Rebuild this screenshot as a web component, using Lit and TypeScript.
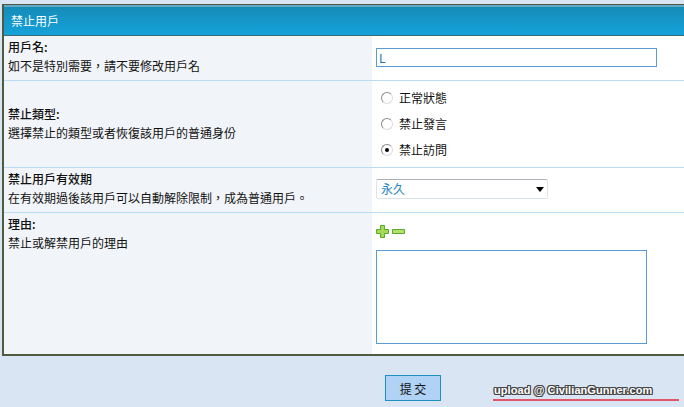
import { LitElement, html, css } from "lit";
import { customElement } from "lit/decorators.js";

const COMMA = "\uFF0C";

@customElement("app-root")
export class AppRoot extends LitElement {
  static styles = css`
    :host { display: block; position: relative; width: 684px; height: 407px; overflow: hidden; background: #dae5f3;
      font-family: "Noto Sans CJK TC", "Liberation Sans", sans-serif; font-size: 12px; line-height: 18px; color: #111; }
    .panel { margin: 4px 0 0 2px; border: solid #4f5b40; border-width: 1px 0 2px 2px; height: 352px; box-sizing: border-box; display: flex; flex-direction: column; background: #fff; }
    .head { height: 31px; border-top: 2px solid #63aac8; border-bottom: 1px solid #3d6a72; box-sizing: border-box; flex: none; padding-left: 7px;
      background: linear-gradient(#168cb8, #14a2da); color: #fff; display: flex; align-items: center; }
    .row { display: grid; grid-template-columns: 368px 1fr; border-bottom: 1px solid #bcdcf3; box-sizing: border-box; flex: none; }
    .row:last-child { border-bottom: 0; flex: 1; }
    .l { background: #f1f5f9; padding: 2px 0 0 4px; }
    .r { padding-left: 4px; }
    .r1 { height: 45px; } .r2 { height: 87px; } .r3 { height: 45px; }
    .r2 .l { padding-top: 24px; }
    b { font-weight: 500; display: block; }
    .desc { display: block; margin-top: 1px; }
    .input { width: 281px; height: 19px; margin-top: 12px; border: 1px solid #5b9bd5; box-sizing: border-box; background: #fff; color: #1a6fa8; padding: 0 0 0 2px; line-height: 17px; font-size: 12px; }
    .opts { display: flex; flex-direction: column; gap: 8px; padding: 8px 0 0 5px; }
    .opt { display: flex; align-items: center; gap: 6px; height: 18px; }
    .radio { width: 12px; height: 12px; border-radius: 50%; box-sizing: border-box; border: 1px solid; border-color: #8a8a8a #dcdcdc #dcdcdc #8a8a8a; background: #fff; display: flex; align-items: center; justify-content: center; }
    .dot { width: 4px; height: 4px; border-radius: 50%; background: #000; }
    .select { width: 172px; height: 20px; margin-top: 11px; box-sizing: border-box; border: 1px solid #dde3ea; border-top-color: #aeaeb6; border-radius: 2px; background: #fff; color: #2585bd; display: flex; align-items: center; justify-content: space-between; padding: 0 3px 0 4px; }
    .tools { display: flex; gap: 3px; margin-top: 12px; height: 13px; }
    .tools svg { display: block; }
    .ta { width: 271px; height: 94px; margin-top: 12px; border: 1px solid #5b9bd5; box-sizing: border-box; background: #fff; }
    .foot { display: flex; padding: 19px 0 0 385px; }
    .btn { width: 56px; height: 26px; box-sizing: border-box; border: 1px solid #1e8fc0; background: #b0d2f5; color: #111; display: flex; align-items: center; justify-content: center; font-size: 12px; padding: 0; font-family: inherit; }
    .mark { position: absolute; left: 494px; top: 382px; font: bold 11px/16px "Liberation Sans", sans-serif; letter-spacing: 0.08px; color: #fff; white-space: nowrap;
      text-shadow: 1px 0 #444, -1px 0 #444, 0 1px #444, 0 -1px #444, 1px 1px #444, -1px -1px #444, 1px -1px #444, -1px 1px #444; }
    .line { position: absolute; left: 493px; top: 399px; width: 186px; height: 2px; background: #e2566a; }
  `;

  render() {
    return html`
      <div class="panel">
        <div class="head">禁止用戶</div>
        <div class="row r1">
          <div class="l"><b>用戶名:</b><span class="desc">如不是特別需要${COMMA}請不要修改用戶名</span></div>
          <div class="r"><div class="input">L</div></div>
        </div>
        <div class="row r2">
          <div class="l"><b>禁止類型:</b><span class="desc">選擇禁止的類型或者恢復該用戶的普通身份</span></div>
          <div class="r"><div class="opts">
            <div class="opt"><span class="radio"></span>正常狀態</div>
            <div class="opt"><span class="radio"></span>禁止發言</div>
            <div class="opt"><span class="radio"><span class="dot"></span></span>禁止訪問</div>
          </div></div>
        </div>
        <div class="row r3">
          <div class="l"><b>禁止用戶有效期</b><span class="desc">在有效期過後該用戶可以自動解除限制${COMMA}成為普通用戶。</span></div>
          <div class="r"><div class="select">永久
            <svg width="8" height="5" viewBox="0 0 8 5"><path d="M0 0h8L4 5z" fill="#000"/></svg></div></div>
        </div>
        <div class="row r4">
          <div class="l"><b>理由:</b><span class="desc">禁止或解禁用戶的理由</span></div>
          <div class="r">
            <div class="tools">
              <svg width="13" height="13" viewBox="0 0 13 13"><path d="M4.5.5h4v4h4v4h-4v4h-4v-4h-4v-4h4z" fill="#a5d957" stroke="#57a928"/></svg>
              <svg width="13" height="13" viewBox="0 0 13 13"><path d="M.5 4.5h12v4H.5z" fill="#b4e06c" stroke="#57a928"/></svg>
            </div>
            <div class="ta"></div>
          </div>
        </div>
      </div>
      <div class="foot"><button class="btn">提 交</button></div>
      <div class="mark">upload @ CivilianGunner.com</div>
      <div class="line"></div>
    `;
  }
}
